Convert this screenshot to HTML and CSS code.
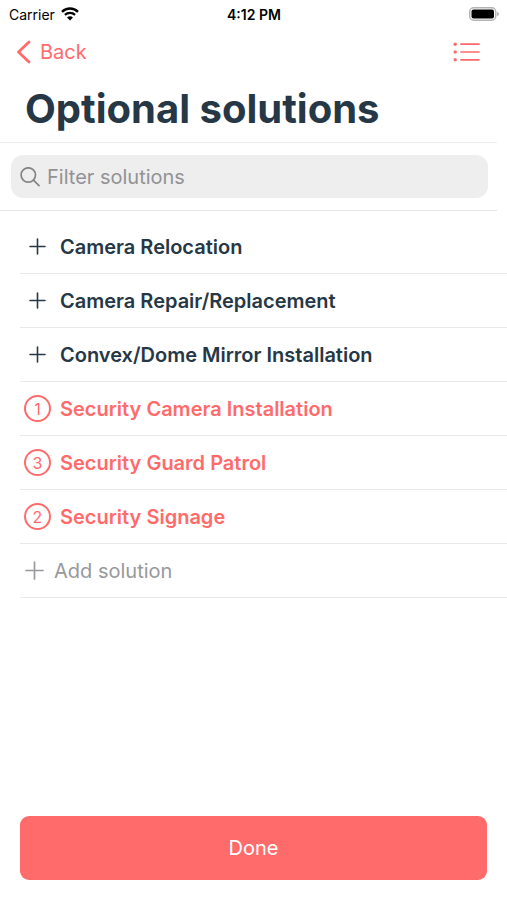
FILE: index.html
```html
<!DOCTYPE html>
<html lang="en">
<head>
<meta charset="utf-8">
<meta name="viewport" content="width=device-width, initial-scale=1">
<title>Optional solutions</title>
<link rel="stylesheet" href="styles.css">
</head>
<body>
<div class="screen">
  <div class="status">
    <div class="carrier">
      <span>Carrier</span>
      <svg width="18" height="14" viewBox="0 0 18 14" aria-hidden="true">
        <path d="M1 4.800A11.500 11.500 0 0 1 17 4.800" fill="none" stroke="#000" stroke-width="2.400"/>
        <path d="M3.900 7.900A7.400 7.400 0 0 1 14.100 7.900" fill="none" stroke="#000" stroke-width="2.200"/>
        <path d="M9 13.600L6 10.600A4.300 4.300 0 0 1 12 10.600Z"/>
      </svg>
    </div>
    <time class="clock">4:12 PM</time>
    <svg class="battery" width="30" height="14" viewBox="0 0 30 14" aria-label="Battery full">
      <rect x="0.750" y="0.750" width="26" height="12.500" rx="4" fill="#fff" stroke="#b4b4b4" stroke-width="1.500"/>
      <rect x="2.500" y="2.500" width="22.500" height="9" rx="2"/>
      <path d="M28 4.800Q30 5.500 30 7T28 9.200Z" fill="#b4b4b4"/>
    </svg>
  </div>
  <nav class="nav">
    <a class="back" href="#">
      <svg width="15" height="24" viewBox="0 0 15 24" aria-hidden="true"><path d="M13 2L2.500 12L13 22" fill="none" stroke="currentColor" stroke-width="2.800" stroke-linecap="round" stroke-linejoin="round"/></svg>
      Back
    </a>
    <button class="menu" type="button" aria-label="List view">
      <svg width="28" height="20" viewBox="0 0 28 20" aria-hidden="true">
        <g fill="currentColor"><circle cx="2.200" cy="2.200" r="1.700"/><circle cx="2.200" cy="10" r="1.700"/><circle cx="2.200" cy="17.800" r="1.700"/></g>
        <path d="M8 2.200H26M8 10H26M8 17.800H26" stroke="currentColor" stroke-width="1.700" stroke-linecap="round"/>
      </svg>
    </button>
  </nav>
  <h1 class="title">Optional solutions</h1>
  <div class="filter">
    <label class="field">
      <svg width="20" height="20" viewBox="0 0 20 20" aria-hidden="true"><g fill="none" stroke="currentColor" stroke-width="1.700" stroke-linecap="round"><circle cx="8.300" cy="8" r="7.200"/><path d="M13.500 13.200L19 18.700"/></g></svg>
      <input type="search" placeholder="Filter solutions" aria-label="Filter solutions">
    </label>
  </div>
  <ul class="list">
    <li><button class="row" type="button"><span class="mark"><svg width="17" height="17" viewBox="0 0 17 17"><path d="M8.500 1V16M1 8.500H16" stroke="currentColor" stroke-width="1.600" stroke-linecap="round"/></svg></span>Camera Relocation</button></li>
    <li><button class="row" type="button"><span class="mark"><svg width="17" height="17" viewBox="0 0 17 17"><path d="M8.500 1V16M1 8.500H16" stroke="currentColor" stroke-width="1.600" stroke-linecap="round"/></svg></span>Camera Repair/Replacement</button></li>
    <li><button class="row" type="button"><span class="mark"><svg width="17" height="17" viewBox="0 0 17 17"><path d="M8.500 1V16M1 8.500H16" stroke="currentColor" stroke-width="1.600" stroke-linecap="round"/></svg></span>Convex/Dome Mirror Installation</button></li>
    <li><button class="row chosen" type="button"><span class="mark count">1</span>Security Camera Installation</button></li>
    <li><button class="row chosen" type="button"><span class="mark count">3</span>Security Guard Patrol</button></li>
    <li><button class="row chosen" type="button"><span class="mark count">2</span>Security Signage</button></li>
    <li><button class="row add" type="button"><svg width="19" height="19" viewBox="0 0 19 19" aria-hidden="true"><path d="M9.500 1V18M1 9.500H18" stroke="currentColor" stroke-width="1.700" stroke-linecap="round"/></svg>Add solution</button></li>
  </ul>
  <div class="footer"><button class="done" type="button">Done</button></div>
</div>
</body>
</html>
```
FILE: styles.css
```css
* { box-sizing: border-box; }
body {
  margin: 0;
  background: #fff;
  color: #263746;
  font-family: Inter, "Liberation Sans", sans-serif;
  font-size: 20px;
}
button, input { font: inherit; color: inherit; border: 0; background: none; padding: 0; margin: 0; }
svg { display: block; flex: none; }
.screen { min-height: 100vh; display: flex; flex-direction: column; }
.status {
  display: grid;
  grid-template-columns: 1fr auto 1fr;
  align-items: center;
  height: 28px;
  padding: 0 8px 0 9px;
  color: #000;
  font-size: 14px;
}
.carrier { display: flex; align-items: center; gap: 6px; }
.clock { font-weight: 600; }
.battery { justify-self: end; }
.nav {
  display: flex;
  align-items: center;
  justify-content: space-between;
  height: 48px;
  padding: 0 26px 0 16px;
  color: #ff6b6b;
}
.back { display: flex; align-items: center; gap: 9px; color: inherit; text-decoration: none; }
.title {
  margin: 0 10px 0 0;
  padding: 0 16px 0 25px;
  border-bottom: 1px solid #ececec;
  font-size: 40px;
  line-height: 66px;
  font-weight: 700;
}
.filter { margin-right: 10px; padding: 12px 9px 12px 11px; border-bottom: 1px solid #e6e6e6; }
.field {
  display: flex;
  align-items: center;
  gap: 7px;
  height: 43px;
  padding: 0 9px;
  border-radius: 12px;
  background: #eee;
  color: #848487;
}
.field input { flex: 1; min-width: 0; outline: 0; appearance: none; }
.field input::placeholder { color: #929295; opacity: 1; }
.list { list-style: none; margin: 9px 0 0; padding: 0 0 0 20px; }
.row {
  display: flex;
  align-items: center;
  gap: 9px;
  width: 100%;
  height: 54px;
  padding-left: 4px;
  border-bottom: 1px solid #e9e9e9;
  font-weight: 600;
  text-align: left;
}
.mark { display: grid; place-items: center; width: 27px; height: 27px; flex: none; }
.count { border: 2px solid currentColor; border-radius: 50%; font-size: 16px; font-weight: 400; }
.chosen { color: #ff6b6b; }
.add { gap: 10px; padding-left: 5px; color: #97999c; font-weight: 400; }
.footer { margin-top: auto; padding: 20px; }
.done { width: 100%; height: 64px; border-radius: 9px; background: #ff6b6b; color: #fff; }
```
